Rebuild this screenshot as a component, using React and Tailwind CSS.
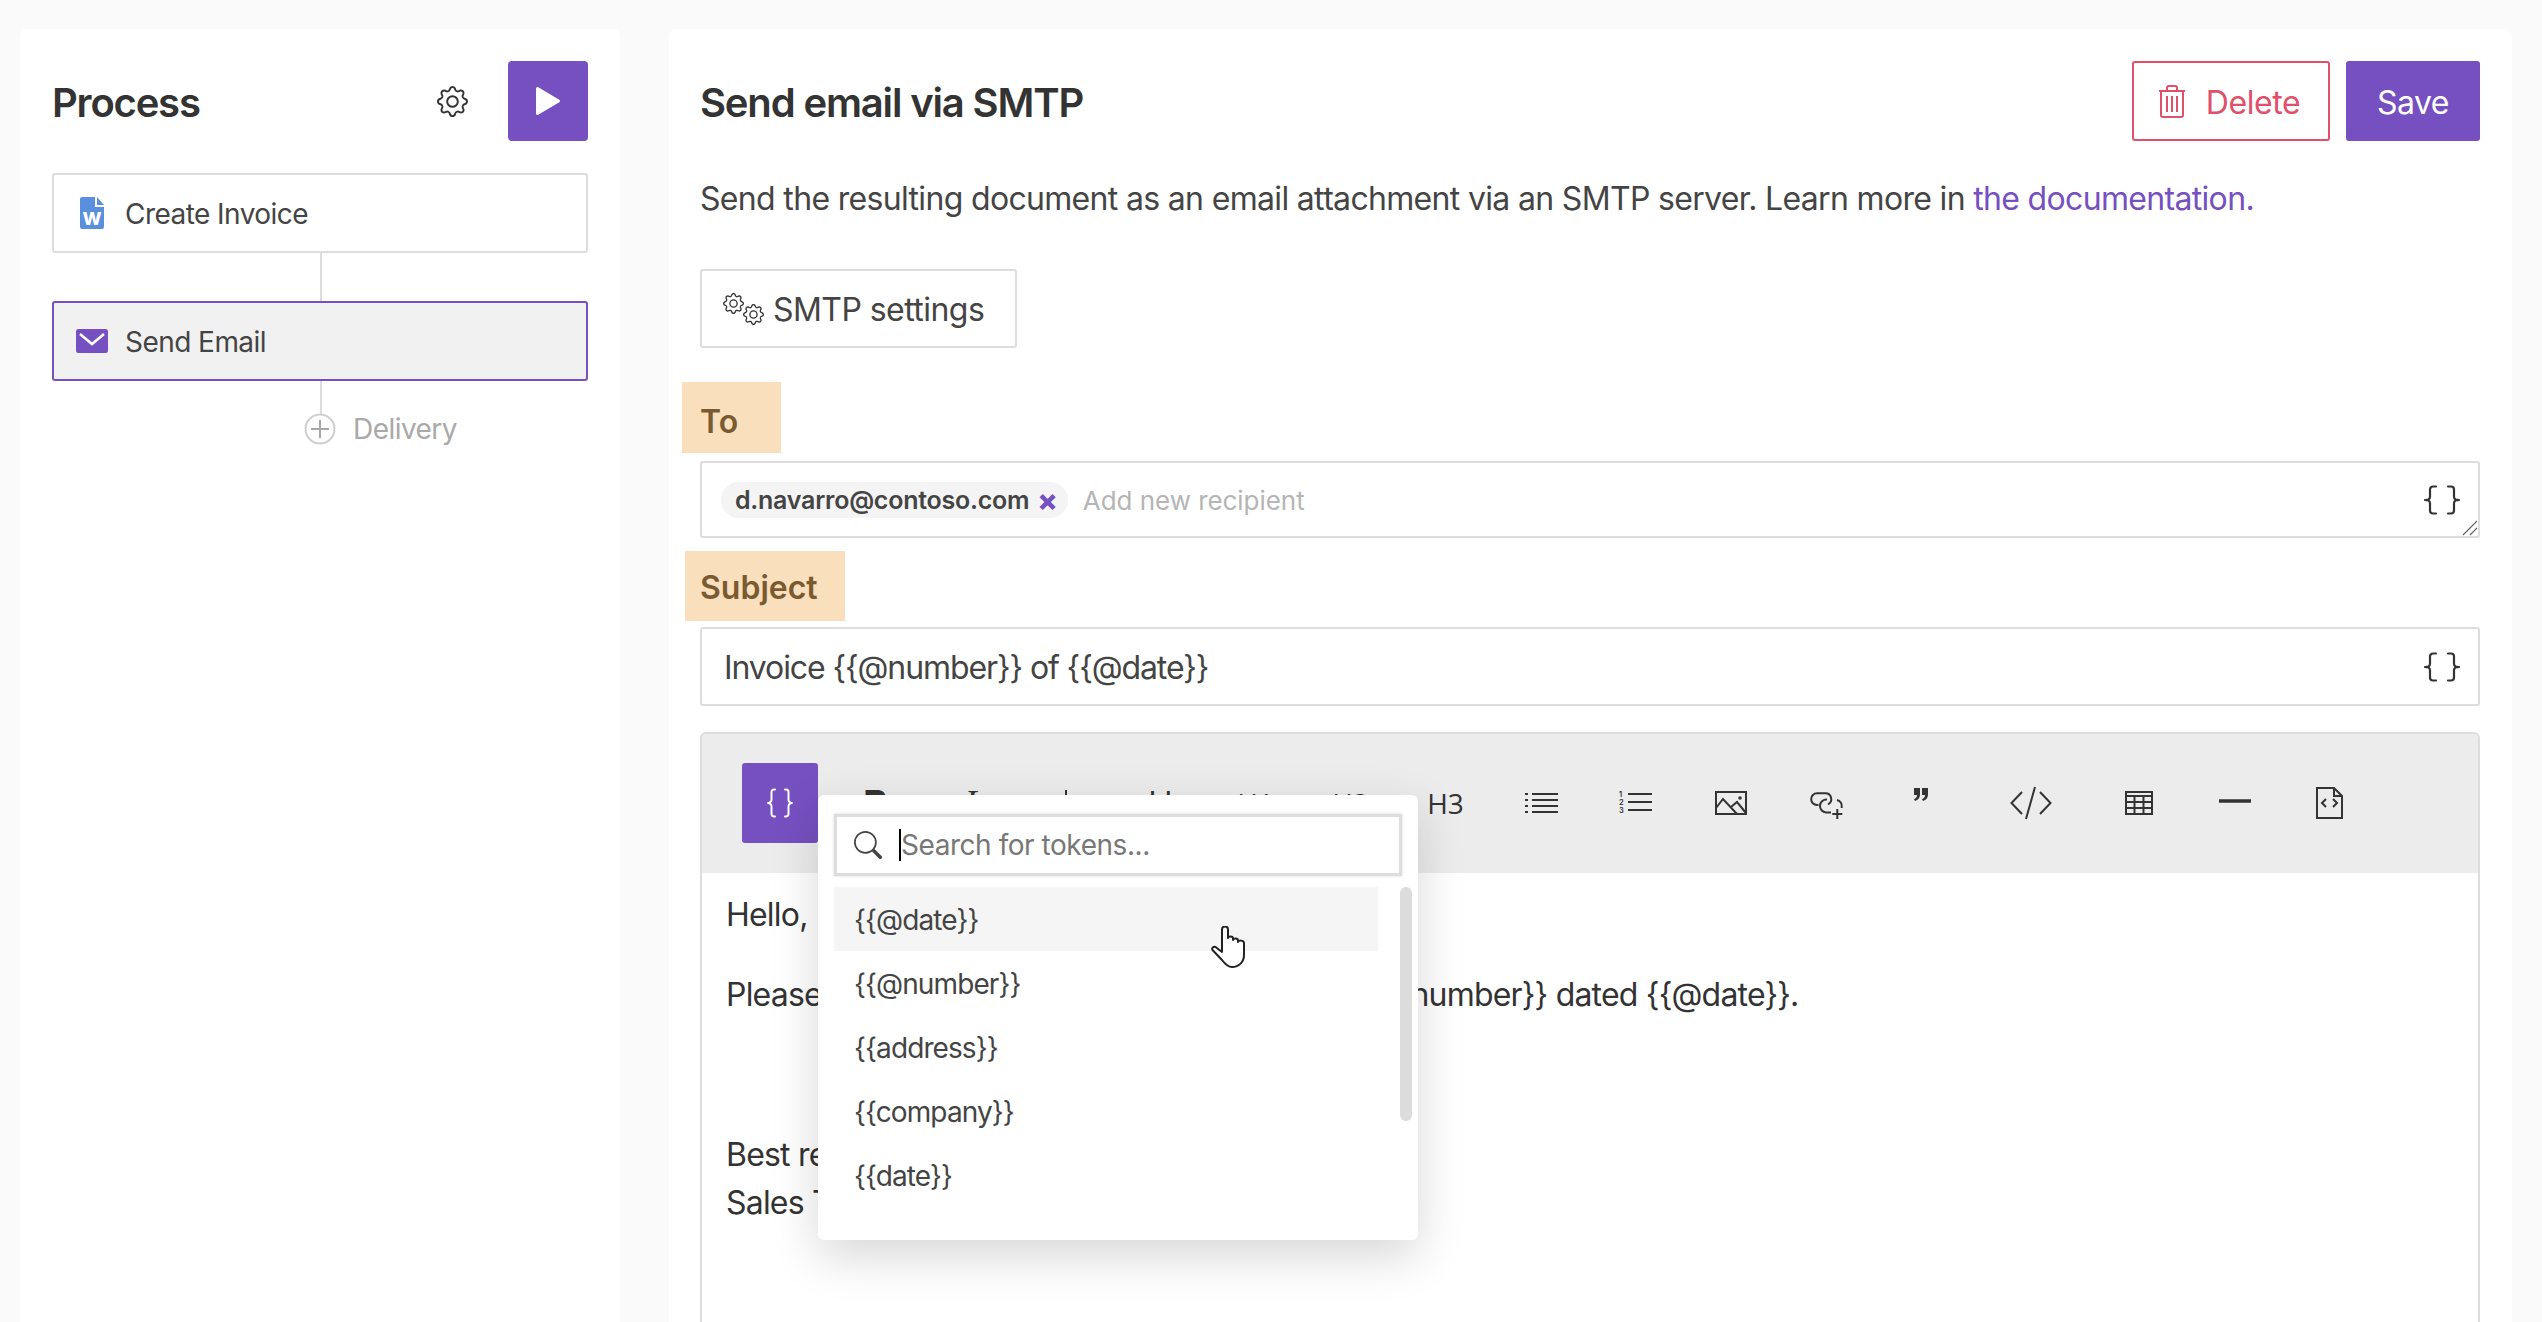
import { BsGear, BsSearch } from "react-icons/bs";

const tokens = ["{{@date}}", "{{@number}}", "{{address}}", "{{company}}", "{{date}}"];

function Braces({ className }) {
  return (
    <svg className={className} viewBox="0 0 36 30" fill="none" stroke="currentColor" strokeWidth="2.2" strokeLinecap="round">
      <path d="M12 1.500H9a3 3 0 0 0-3 3v7a3.500 3.500 0 0 1-4.500 3.500A3.500 3.500 0 0 1 6 18.500v7a3 3 0 0 0 3 3h3" />
      <path d="M24 1.500h3a3 3 0 0 1 3 3v7a3.500 3.500 0 0 0 4.500 3.500A3.500 3.500 0 0 0 30 18.500v7a3 3 0 0 1-3 3h-3" />
    </svg>
  );
}

function ToolIcon({ children }) {
  return (
    <svg className="w-10 h-10 overflow-visible text-[#333]" viewBox="0 0 40 40" fill="none" stroke="currentColor" strokeWidth="2">
      {children}
    </svg>
  );
}

function ToolItem({ children, className = "" }) {
  return <div className={`w-[95px] h-20 shrink-0 flex items-center justify-center text-[#333] ${className}`}>{children}</div>;
}

function NodeBox({ icon, label, active }) {
  return (
    <div className={`h-20 rounded-[3px] flex items-center pl-[18px] border-2 ${active ? "border-[#7650c0] bg-[#f1f1f1]" : "border-[#dddddd] bg-white"}`}>
      <div className="w-10 flex justify-center">{icon}</div>
      <span className="ml-[13px] pt-[2px] text-[28px] tracking-[-0.55px] text-[#444]">{label}</span>
    </div>
  );
}

export default function App() {
  return (
    <div className="h-[1322px] overflow-hidden bg-[#fafafa] flex pt-[29px] pl-5 gap-[49px] font-['Inter',sans-serif] text-[#333]">
      {/* left: process */}
      <aside className="w-[600px] shrink-0 h-[1400px] bg-white rounded-lg px-8 pt-8">
        <div className="flex items-center h-20">
          <h1 className="text-[40px] pt-[3px] font-semibold tracking-[-1.2px] flex-1">Process</h1>
          <BsGear size={31} className="text-[#333] mr-[40px]" />
          <button className="w-20 h-20 bg-[#7650c0] rounded-[4px] flex items-center justify-center">
            <svg width="26" height="30" viewBox="0 0 26 30" fill="white" stroke="white" strokeWidth="3" strokeLinejoin="round">
              <path d="M2.500 2.500L23.500 15L2.500 27.500Z" />
            </svg>
          </button>
        </div>
        <div className="mt-8">
          <NodeBox
            label="Create Invoice"
            icon={
              <svg width="24" height="32" viewBox="0 0 24 32">
                <path d="M2 0h13v10h9v20a2 2 0 0 1-2 2H2a2 2 0 0 1-2-2V2a2 2 0 0 1 2-2z" fill="#5a8fde" />
                <path d="M17 0l7 8h-7z" fill="#5a8fde" />
                <text x="12" y="28" textAnchor="middle" fontSize="18" fontWeight="800" fontFamily="Inter" fill="white">W</text>
              </svg>
            }
          />
          <div className="w-[2px] h-12 bg-[#dddddd] ml-[268px]" />
          <NodeBox
            active
            label="Send Email"
            icon={
              <svg width="32" height="24" viewBox="0 0 32 24">
                <rect width="32" height="24" rx="2.500" fill="#7650c0" />
                <path d="M4 5l12 10 12-10" fill="none" stroke="white" strokeWidth="2.500" />
              </svg>
            }
          />
          <div className="w-[2px] h-[33px] bg-[#dddddd] ml-[268px]" />
          <div className="flex items-center ml-[252px] h-[30px]">
            <svg width="32" height="32" viewBox="0 0 32 32" fill="none" stroke="#cfcfcf" strokeWidth="2">
              <circle cx="16" cy="16" r="14.500" />
              <path d="M16 7v18M7 16h18" stroke="#a8a8a8" />
            </svg>
            <span className="ml-[17px] text-[28px] tracking-[-0.55px] text-[#a9a9a9]">Delivery</span>
          </div>
        </div>
      </aside>

      {/* right: step editor */}
      <main className="w-[1843px] shrink-0 h-[1400px] bg-white rounded-lg pl-[31px] pr-8 pt-8">
        <div className="flex items-center h-20">
          <h2 className="text-[40px] pt-[3px] font-semibold tracking-[-1.15px] flex-1">Send email via SMTP</h2>
          <button className="w-[198px] h-20 pr-1 border-2 border-[#e0506a] rounded-[3px] text-[#e0506a] text-[32px] tracking-[-0.4px] flex items-center justify-center gap-[20px]">
            <svg width="28" height="33" viewBox="0 0 28 33" fill="none" stroke="currentColor" strokeWidth="2">
              <path d="M1 6h26M3 6v24a2 2 0 0 0 2 2h18a2 2 0 0 0 2-2V6M9 6V3a2 2 0 0 1 2-2h6a2 2 0 0 1 2 2v3M9 11v16M14 11v16M19 11v16" />
            </svg>
            <span className="pt-[3px]">Delete</span>
          </button>
          <button className="w-[134px] h-20 ml-4 pt-[3px] bg-[#7650c0] rounded-[3px] text-white text-[32px] tracking-[-0.5px]">Save</button>
        </div>

        <p className="mt-[38px] text-[32px] leading-[40px] tracking-[-0.67px] text-[#444]">
          Send the resulting document as an email attachment via an SMTP server. Learn more in{" "}
          <a className="text-[#7650c0]">the documentation.</a>
        </p>

        <button className="mt-[50px] block h-[79px] w-[317px] border-2 border-[#dddddd] rounded-[3px]">
          <span className="flex items-center pl-[21px]">
            <span className="flex w-[40px] h-[32px] text-[#333]">
              <BsGear size={21} className="self-start shrink-0" />
              <BsGear size={21} className="self-end shrink-0 -ml-px" />
            </span>
            <span className="ml-[10px] pt-[3px] text-[32px] tracking-[-0.55px] text-[#444]">SMTP settings</span>
          </span>
        </button>

        <div className="mt-[34px] -ml-[18px] w-[99px] h-[71px] bg-[#fadfbd] pl-[18px] pt-[18px] text-[32px] leading-[44px] font-semibold text-[#7a5a30]">To</div>

        <div className="relative mt-2 h-[77px] border-2 border-[#dddddd] rounded-[3px] flex items-center pl-[19px]">
          <div className="h-9 rounded-full bg-[#f4f4f4] flex items-center pl-[14px] pr-[10px]">
            <span className="pt-[2px] text-[25px] tracking-[-0.25px] font-semibold text-[#444]">d.navarro@contoso.com</span>
            <span className="ml-[8px] text-[30px] leading-none font-extrabold text-[#7650c0]">×</span>
          </div>
          <span className="ml-[15px] pt-[2px] text-[26px] tracking-[-0.05px] text-[#b5b5b5]">Add new recipient</span>
          <Braces className="w-9 h-[30px] ml-auto mr-[18px] text-[#333]" />
          <svg className="absolute right-0 bottom-0" width="16" height="16" viewBox="0 0 16 16" stroke="#666" strokeWidth="1.200">
            <path d="M1 15L15 1M8 15l7-7" />
          </svg>
        </div>

        <div className="mt-[13px] -ml-[15px] w-[160px] h-[70px] bg-[#fadfbd] pl-[15px] pt-[15px] text-[32px] leading-[44px] font-semibold text-[#7a5a30]">Subject</div>

        <div className="mt-[6px] h-[79px] border-2 border-[#dddddd] rounded-[3px] flex items-center pl-[22px]">
          <span className="pt-[3px] text-[32px] tracking-[-1.1px] text-[#444]">{"Invoice {{@number}} of {{@date}}"}</span>
          <Braces className="w-9 h-[30px] ml-auto mr-[18px] text-[#333]" />
        </div>

        <div className="relative mt-[26px] h-[640px] border-2 border-[#dddddd] rounded-[6px]">
          <div className="h-[139px] bg-[#ececec] flex pl-10 pt-[29px] rounded-t-[4px]">
            <button className="w-[76px] h-20 shrink-0 bg-[#7650c0] rounded-[3px] flex items-center justify-center mr-[10px] text-white">
              <svg width="28" height="30" viewBox="0 0 28 30" fill="none" stroke="currentColor" strokeWidth="2" strokeLinecap="round">
                <path d="M9 1.500H8a2.500 2.500 0 0 0-2.500 2.500v7A3.500 3.500 0 0 1 1.500 15a3.500 3.500 0 0 1 4 4v7A2.500 2.500 0 0 0 8 28.500h1" />
                <path d="M19 1.500h1A2.500 2.500 0 0 1 22.500 4v7a3.500 3.500 0 0 0 4 4 3.500 3.500 0 0 0-4 4v7a2.500 2.500 0 0 1-2.500 2.500h-1" />
              </svg>
            </button>
            <ToolItem><span className="text-[36px] font-extrabold">B</span></ToolItem>
            <ToolItem><span className="text-[36px] italic font-['Liberation_Serif',serif]">I</span></ToolItem>
            <ToolItem>
              <svg width="28" height="26" viewBox="0 0 28 26" fill="none" stroke="#333" strokeWidth="2">
                <path d="M14 0v26M1 13h26" />
              </svg>
            </ToolItem>
            <ToolItem><span className="text-[34px] font-['Open_Sans',sans-serif]">U</span></ToolItem>
            <ToolItem><span className="text-[28px] font-['Open_Sans',sans-serif]">H1</span></ToolItem>
            <ToolItem><span className="text-[28px] font-['Open_Sans',sans-serif]">H2</span></ToolItem>
            <ToolItem><span className="text-[28px] font-['Open_Sans',sans-serif]">H3</span></ToolItem>
            <ToolItem>
              <ToolIcon>
                <path d="M11 11h26M11 17h26M11 23h26M11 29h26" />
                <path d="M4 11h3M4 17h3M4 23h3M4 29h3" />
              </ToolIcon>
            </ToolItem>
            <ToolItem>
              <ToolIcon>
                <path d="M12 11h24M12 19h24M12 27h24" />
                <g fontFamily="Inter" fontSize="7.500" fontWeight="600" fill="currentColor" stroke="none">
                  <text x="3" y="14">1</text>
                  <text x="3" y="22">2</text>
                  <text x="3" y="30">3</text>
                </g>
              </ToolIcon>
            </ToolItem>
            <ToolItem>
              <ToolIcon>
                <rect x="5" y="9" width="30" height="22" />
                <path d="M5 25l7-9 14 15M20 24l6-5 9 11" />
                <circle cx="29" cy="15" r="0.800" fill="currentColor" />
              </ToolIcon>
            </ToolItem>
            <ToolItem>
              <ToolIcon>
                <path d="M12.500 22H11a5.800 5.800 0 0 1 0-11.700h8.500a5.800 5.800 0 0 1 2.500 11" />
                <path d="M21 16.500a6.500 6.500 0 0 0-1 13h5" />
                <path d="M31 17a6 6 0 0 1 4.700 7v1" />
                <path d="M31.300 26v10M26.300 31h10" />
              </ToolIcon>
            </ToolItem>
            <ToolItem>
              <ToolIcon>
                <path d="M13 5h6v6c0 4-2 6-5 7l-1-2c2-.5 3-2 3-4h-3zM21 5h6v6c0 4-2 6-5 7l-1-2c2-.5 3-2 3-4h-3z" fill="currentColor" stroke="none" />
              </ToolIcon>
            </ToolItem>
            <ToolItem className="mx-[14px]">
              <ToolIcon>
                <path d="M12 9L1.500 20L12 31M30 9l10.500 11L30 31M25 4L16 36" />
              </ToolIcon>
            </ToolItem>
            <ToolItem>
              <ToolIcon>
                <rect x="7" y="9" width="26" height="22" />
                <path d="M7 13h26M7 19h26M7 25h26M15.500 13v18M24.500 13v18" />
              </ToolIcon>
            </ToolItem>
            <ToolItem>
              <ToolIcon>
                <path d="M5 18h32" strokeWidth="3.500" />
              </ToolIcon>
            </ToolItem>
            <ToolItem>
              <ToolIcon>
                <path d="M8 5h17l8 8v22H8zM25 5v8h8" />
                <path d="M17 16l-4 4 4 4M24 16l4 4-4 4" />
              </ToolIcon>
            </ToolItem>
          </div>

          <div className="px-6 pt-[18px] text-[32px] leading-[48px] tracking-[-0.8px] text-[#333]">
            <p>Hello,</p>
            <p className="mt-8">{"Please find attached the invoice, numbered {{@number}} dated {{@date}}."}</p>
            <p className="mt-8">&nbsp;</p>
            <p className="mt-8">Best regards,</p>
            <p>Sales Team</p>
          </div>

          {/* token picker */}
          <div className="absolute left-[116px] top-[61px] w-[600px] h-[445px] bg-white rounded-md shadow-[0_16px_48px_rgba(0,0,0,0.16)] pl-4 pt-[19px]">
            <div className="w-[568px] h-[62px] border-[3px] border-[#dddddd] shadow-[0_0_3px_rgba(0,0,0,0.15)] flex items-center pl-[17px]">
              <BsSearch size={28} className="text-[#444]" />
              <span className="ml-[17px] w-[2px] h-8 bg-black" />
              <span className="text-[28px] tracking-[-0.45px] text-[#777]">Search for tokens...</span>
            </div>
            <div className="mt-[11px] flex">
              <div className="w-[544px] shrink-0">
                {tokens.map((t, i) => (
                  <div key={t} className={`h-16 flex items-center pl-5 pt-[2px] text-[28px] tracking-[-0.9px] text-[#444] ${i === 0 ? "bg-[#f5f5f5]" : ""}`}>{t}</div>
                ))}
              </div>
              <div className="ml-[22px] w-3 h-[234px] rounded-full bg-[#dcdcdc]" />
            </div>
          </div>

          {/* mouse pointer */}
          <svg className="absolute left-[509px] top-[192px]" width="36" height="42" viewBox="0 0 36 42" fill="white" stroke="#222" strokeWidth="2" strokeLinejoin="round">
            <path d="M11 24V3.500a3 3 0 0 1 6 0V12c0-2 5-2 5 .5V14c0-2 5-2 5 .5V16c0-2 6-2 6 1v12c0 7-5 12-12 12-4 0-7-3-10-7L1.500 24c-1-2 1-4 3-3L11 26z" />
          </svg>
        </div>
      </main>
    </div>
  );
}
